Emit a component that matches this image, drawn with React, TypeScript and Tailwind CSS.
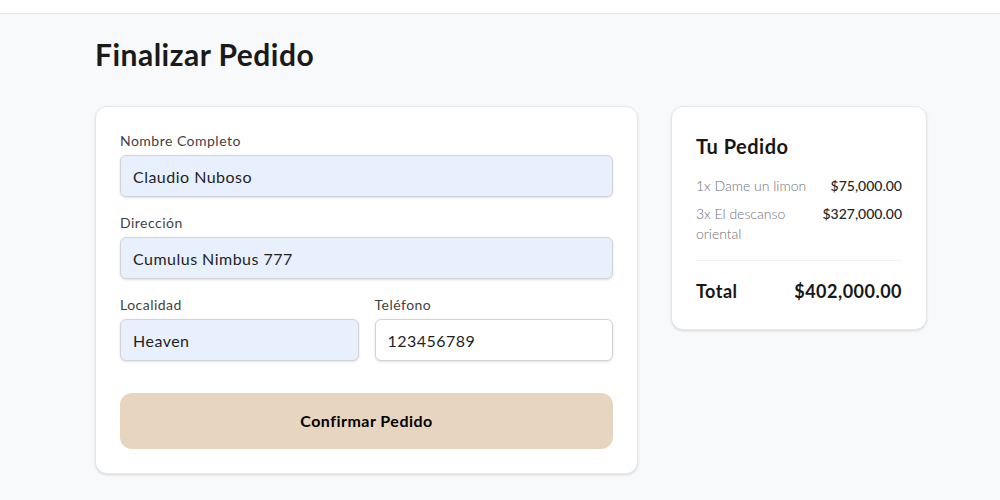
import React from "react";

const font = { fontFamily: "Lato, 'Noto Sans', sans-serif" };

//NOTE - campos del formulario
const Field = ({ label, value, filled = true }: { label: string; value: string; filled?: boolean }) => {
  return (
    <div className="flex flex-col">
      <label className="text-sm text-[#3f3f46] mb-1 leading-5">{label}</label>
      <input
        readOnly
        value={value}
        className={`h-[42px] w-full rounded-md border border-[#d4d4d8] px-3 text-base tracking-[0.03em] text-[#1f1f1f] shadow-sm outline-none ${
          filled ? "bg-[#e8f0fe]" : "bg-white"
        }`}
        style={font}
      />
    </div>
  );
};

const items = [
  { qty: "1x Dame un limon", price: "$75,000.00" },
  { qty: "3x El descanso oriental", price: "$327,000.00" },
];

export default function App() {
  return (
    <div className="min-h-[500px] bg-[#f8f9fb] text-[#171717] tracking-[0.03em]" style={font}>
      <div className="h-[14px] bg-white border-b border-[#e5e7eb]" />
      <div className="ml-[95px] w-[832px]">
        <h1 className="mt-[22px] text-[30px] font-bold leading-9 text-[#1a1a1a]">Finalizar Pedido</h1>
        <div className="mt-[34px] flex items-start gap-[33px]">
          <div className="w-[543px] rounded-xl border border-[#e5e7eb] bg-white p-6 shadow-sm">
            <div className="flex flex-col gap-4">
              <Field label="Nombre Completo" value="Claudio Nuboso" />
              <Field label="Dirección" value="Cumulus Nimbus 777" />
              <div className="grid grid-cols-2 gap-4">
                <Field label="Localidad" value="Heaven" />
                <Field label="Teléfono" value="123456789" filled={false} />
              </div>
            </div>
            <button className="mt-8 h-14 w-full rounded-xl bg-[#e8d5c0] text-base font-bold tracking-[0.03em] text-black">
              Confirmar Pedido
            </button>
          </div>
          <div className="w-[256px] rounded-xl border border-[#e5e7eb] bg-white p-6 shadow-sm">
            <h2 className="mt-[1px] text-xl font-bold leading-7">Tu Pedido</h2>
            <div className="mt-4 flex flex-col gap-2">
              {items.map((it) => (
                <div key={it.qty} className="flex justify-between gap-2 text-sm leading-5 tracking-normal">
                  <span className="font-light text-[#71717a]">{it.qty}</span>
                  <span className="shrink-0 font-medium text-[#262626]">{it.price}</span>
                </div>
              ))}
            </div>
            <div className="mt-4 border-t border-[#f0f0f0] pt-4">
              <div className="flex justify-between text-lg font-bold leading-7">
                <span>Total</span>
                <span>$402,000.00</span>
              </div>
            </div>
          </div>
        </div>
      </div>
    </div>
  );
}
